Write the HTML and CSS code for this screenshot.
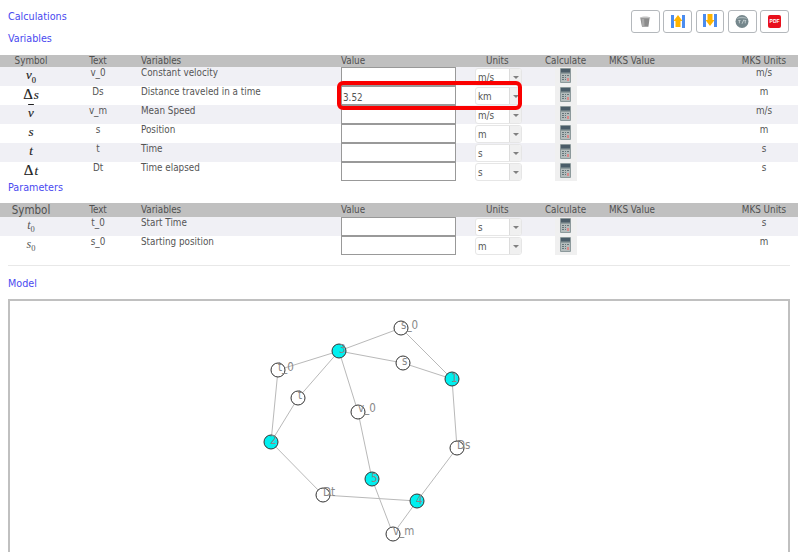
FILE: index.html
```html
<!DOCTYPE html>
<html lang="en">
<head>
<meta charset="utf-8">
<title>Calculations</title>
<link rel="stylesheet" href="styles.css">
</head>
<body>
<svg class="defs" width="0" height="0" aria-hidden="true">
  <symbol id="calc" viewBox="0 0 11 15">
    <rect width="11" height="15" rx="1" fill="#8d9a9c"/>
    <rect x="1" y="1" width="9" height="3.5" fill="#4a5c68"/>
    <rect x="1" y="6" width="9" height="8" fill="#b4bcbc"/>
    <path d="M2 7h2v1H2zM5 7h1v1H5zM7 7h2v1H7zM2 9h2v1H2zM5 9h1v1H5zM2 11h2v1H2zM5 11h1v1H5z" fill="#66757a"/>
    <rect x="7" y="10" width="2" height="3" fill="#d98a8a"/>
  </symbol>
</svg>

<header class="top">
  <div class="titles">
    <h1 class="link-title">Calculations</h1>
    <h2 class="link-title second">Variables</h2>
  </div>
  <div class="tools">
    <button class="tool" type="button" aria-label="Clear">
      <svg width="12" height="13" viewBox="0 0 14 14"><path d="M1.500 2.500 12.500 2 11 13H3.500z" fill="#8b8b8b"/><path d="M1 2.500C3 1 10 .6 13 2v1.200H1z" fill="#c2c2c2"/><path d="M3 4h3l.5 9H3.600z" fill="#a9a9a9"/></svg>
    </button>
    <button class="tool" type="button" aria-label="Load">
      <svg width="14" height="14" viewBox="0 0 14 14"><rect x="0" y="1" width="14" height="13" fill="#3f7fe8"/><rect x="2" y="1" width="10" height="13" fill="#fff"/><rect x="0" y="1" width="3" height="13" fill="#4a8cf0"/><rect x="11" y="1" width="3" height="13" fill="#4a8cf0"/><path d="M7 1 11.500 7H9.500v6h-5V7H2.500z" fill="#ffb400"/></svg>
    </button>
    <button class="tool" type="button" aria-label="Save">
      <svg width="14" height="14" viewBox="0 0 14 14"><rect x="0" y="0" width="14" height="13" fill="#3f7fe8"/><rect x="2" y="0" width="10" height="13" fill="#fff"/><rect x="0" y="0" width="3" height="13" fill="#4a8cf0"/><rect x="11" y="0" width="3" height="13" fill="#4a8cf0"/><path d="M4.500 0h5v6h2L7 12 2.500 6h2z" fill="#ffb400"/></svg>
    </button>
    <button class="tool" type="button" aria-label="Info">
      <svg width="14" height="13" viewBox="0 0 15 14"><circle cx="7.500" cy="7" r="7" fill="#75878c"/><path d="M1.500 4.500C4 1 11 1 13.500 4.500 11 3 4 3 1.500 4.500z" fill="#a9b6b9"/><path d="M3.500 6h2.500M4.700 6v3M7.500 9.500l2-4.500M10 6h2M11 6v3" stroke="#d7dfe0" stroke-width=".8" fill="none"/></svg>
    </button>
    <button class="tool" type="button" aria-label="PDF">
      <span class="pdf">PDF</span>
    </button>
  </div>
</header>

<section class="sheet">
  <div class="row head">
    <span class="c-sym">Symbol</span><span class="c-txt">Text</span><span class="c-var">Variables</span><span class="c-val">Value</span><span class="c-uni">Units</span><span class="c-calc">Calculate</span><span class="c-mks">MKS Value</span><span class="c-mu">MKS Units</span>
  </div>

  <div class="row odd">
    <span class="c-sym math"><i>v</i><sub>0</sub></span><span class="c-txt">v_0</span><span class="c-var">Constant velocity</span>
    <span class="c-val"><input class="num" type="text"></span>
    <span class="c-uni"><span class="pick"><span class="pick-v">m/s</span><span class="pick-a"></span></span></span>
    <span class="c-calc"><span class="calc"><svg width="11" height="15"><use href="#calc"/></svg></span></span>
    <span class="c-mks"></span><span class="c-mu">m/s</span>
  </div>
  <div class="row hl-row">
    <span class="c-sym math"><b>Δ</b><i>s</i></span><span class="c-txt">Ds</span><span class="c-var">Distance traveled in a time</span>
    <span class="c-val"><input class="num" type="text" value="3.52"></span>
    <span class="c-uni"><span class="pick"><span class="pick-v">km</span><span class="pick-a"></span></span></span>
    <span class="c-calc"><span class="calc"><svg width="11" height="15"><use href="#calc"/></svg></span></span>
    <span class="c-mks"></span><span class="c-mu">m</span>
    <span class="highlight"></span>
  </div>
  <div class="row odd">
    <span class="c-sym math"><i class="bar">v</i></span><span class="c-txt">v_m</span><span class="c-var">Mean Speed</span>
    <span class="c-val"><input class="num" type="text"></span>
    <span class="c-uni"><span class="pick"><span class="pick-v">m/s</span><span class="pick-a"></span></span></span>
    <span class="c-calc"><span class="calc"><svg width="11" height="15"><use href="#calc"/></svg></span></span>
    <span class="c-mks"></span><span class="c-mu">m/s</span>
  </div>
  <div class="row">
    <span class="c-sym math"><i>s</i></span><span class="c-txt">s</span><span class="c-var">Position</span>
    <span class="c-val"><input class="num" type="text"></span>
    <span class="c-uni"><span class="pick"><span class="pick-v">m</span><span class="pick-a"></span></span></span>
    <span class="c-calc"><span class="calc"><svg width="11" height="15"><use href="#calc"/></svg></span></span>
    <span class="c-mks"></span><span class="c-mu">m</span>
  </div>
  <div class="row odd">
    <span class="c-sym math"><i>t</i></span><span class="c-txt">t</span><span class="c-var">Time</span>
    <span class="c-val"><input class="num" type="text"></span>
    <span class="c-uni"><span class="pick"><span class="pick-v">s</span><span class="pick-a"></span></span></span>
    <span class="c-calc"><span class="calc"><svg width="11" height="15"><use href="#calc"/></svg></span></span>
    <span class="c-mks"></span><span class="c-mu">s</span>
  </div>
  <div class="row">
    <span class="c-sym math"><b>Δ</b><i>t</i></span><span class="c-txt">Dt</span><span class="c-var">Time elapsed</span>
    <span class="c-val"><input class="num" type="text"></span>
    <span class="c-uni"><span class="pick"><span class="pick-v">s</span><span class="pick-a"></span></span></span>
    <span class="c-calc"><span class="calc"><svg width="11" height="15"><use href="#calc"/></svg></span></span>
    <span class="c-mks"></span><span class="c-mu">s</span>
  </div>
</section>

<h2 class="link-title params">Parameters</h2>

<section class="sheet">
  <div class="row head head-2">
    <span class="c-sym sym-large">Symbol</span><span class="c-txt">Text</span><span class="c-var">Variables</span><span class="c-val">Value</span><span class="c-uni">Units</span><span class="c-calc">Calculate</span><span class="c-mks">MKS Value</span><span class="c-mu">MKS Units</span>
  </div>
  <div class="row odd">
    <span class="c-sym math small"><i>t</i><sub>0</sub></span><span class="c-txt">t_0</span><span class="c-var">Start Time</span>
    <span class="c-val"><input class="num" type="text"></span>
    <span class="c-uni"><span class="pick"><span class="pick-v">s</span><span class="pick-a"></span></span></span>
    <span class="c-calc"><span class="calc"><svg width="11" height="15"><use href="#calc"/></svg></span></span>
    <span class="c-mks"></span><span class="c-mu">s</span>
  </div>
  <div class="row">
    <span class="c-sym math small"><i>s</i><sub>0</sub></span><span class="c-txt">s_0</span><span class="c-var">Starting position</span>
    <span class="c-val"><input class="num" type="text"></span>
    <span class="c-uni"><span class="pick"><span class="pick-v">m</span><span class="pick-a"></span></span></span>
    <span class="c-calc"><span class="calc"><svg width="11" height="15"><use href="#calc"/></svg></span></span>
    <span class="c-mks"></span><span class="c-mu">m</span>
  </div>
</section>

<hr class="rule">
<h2 class="link-title model">Model</h2>

<div class="canvas">
  <svg class="graph" width="778" height="260" viewBox="10 301 778 260">
    <g class="edges">
      <line x1="401" y1="328" x2="339" y2="351"/><line x1="401" y1="328" x2="452" y2="379"/>
      <line x1="339" y1="351" x2="278" y2="370"/><line x1="339" y1="351" x2="403" y2="363"/>
      <line x1="403" y1="363" x2="452" y2="379"/><line x1="339" y1="351" x2="298" y2="398"/>
      <line x1="339" y1="351" x2="358" y2="412"/><line x1="278" y1="370" x2="271" y2="442"/>
      <line x1="298" y1="398" x2="271" y2="442"/><line x1="452" y1="379" x2="457" y2="448"/>
      <line x1="358" y1="412" x2="372" y2="479"/><line x1="271" y1="442" x2="323" y2="495"/>
      <line x1="323" y1="495" x2="417" y2="501"/><line x1="457" y1="448" x2="417" y2="501"/>
      <line x1="372" y1="479" x2="393" y2="534"/><line x1="417" y1="501" x2="393" y2="534"/>
    </g>
    <g class="nodes">
      <circle cx="401" cy="328" r="7"/><circle cx="403" cy="363" r="7"/><circle cx="278" cy="370" r="7"/>
      <circle cx="298" cy="398" r="7"/><circle cx="358" cy="412" r="7"/><circle cx="457" cy="448" r="7"/>
      <circle cx="323" cy="495" r="7"/><circle cx="393" cy="534" r="7"/>
      <circle class="on" cx="339" cy="351" r="7"/><circle class="on" cx="452" cy="379" r="7"/>
      <circle class="on" cx="271" cy="442" r="7"/><circle class="on" cx="372" cy="479" r="7"/>
      <circle class="on" cx="417" cy="501" r="7"/>
    </g>
    <g class="labels">
      <text x="401" y="329">s_0</text><text x="339" y="353">3</text><text x="402" y="365">s</text>
      <text x="451" y="382">1</text><text x="278" y="371">t_0</text><text x="298" y="399">t</text>
      <text x="358" y="412">v_0</text><text x="270" y="444">2</text><text x="457" y="449">Ds</text>
      <text x="371" y="482">5</text><text x="323" y="496">Dt</text><text x="416" y="504">4</text>
      <text x="393" y="535">v_m</text>
    </g>
  </svg>
</div>
</body>
</html>
```

FILE: styles.css
```css
* { box-sizing: border-box; }

html, body {
  margin: 0;
  height: 552px;
  overflow: hidden;
  background: #fff;
}

body {
  font-family: "DejaVu Sans Condensed", "DejaVu Sans", sans-serif;
  font-size: 9.800px;
  color: #555;
}

.defs { position: absolute; }

.top {
  display: flex;
  justify-content: space-between;
  height: 55px;
  padding: 10px 11px 0 8px;
}

.link-title {
  margin: 0;
  font-size: 10.700px;
  font-weight: normal;
  line-height: 13px;
  color: #4a4af0;
}

.second { margin-top: 9px; }

.tools {
  display: flex;
  gap: 3.500px;
  height: 22.500px;
}

.tool {
  display: flex;
  align-items: center;
  justify-content: center;
  width: 28.800px;
  height: 22.500px;
  padding: 0;
  background: #fff;
  border: 1.500px solid #b4b8bc;
  border-radius: 3px;
}

.pdf {
  display: block;
  width: 13px;
  height: 13px;
  border-radius: 2px;
  background: #e8101c;
  color: #fff;
  font-size: 5px;
  font-weight: bold;
  line-height: 13px;
  text-align: center;
}

.row {
  position: relative;
  display: grid;
  grid-template-columns: 62px 72px 207px 134px 58px 65px 132px 68px;
  height: 19px;
  line-height: 12px;
  width: 798px;
}

.hl-row { z-index: 2; }

.odd { background: #f0f0f5; }

.head {
  height: 12px;
  background: #c0c0c0;
  color: #505050;
  line-height: 12px;
}

.head-2 {
  height: 14px;
  line-height: 14px;
}

.sym-large { font-size: 11.500px; }

.c-sym, .c-txt, .c-calc, .c-mu { text-align: center; }
.c-var { padding-left: 7px; }
.c-mks { padding-left: 11px; }
.head .c-uni { padding-left: 11px; }

.math {
  font-family: "Liberation Serif", serif;
  font-size: 13px;
  line-height: 16px;
  color: #222;
}

.math b { font-size: 15px; font-weight: normal; font-style: normal; margin-right: 1px; -webkit-text-stroke: .2px #222; }
.math i { -webkit-text-stroke: .15px #222; }
.math sub { font-size: 8.500px; line-height: 0; -webkit-text-stroke: .15px #222; }
.small { color: #555; font-size: 12px; }
.small i { -webkit-text-stroke: 0; color: #555; }
.small sub { -webkit-text-stroke: 0; }

.bar { text-decoration: overline; text-decoration-thickness: 1px; }

.num {
  display: block;
  width: 115px;
  height: 19px;
  padding: 3px 1px 0;
  margin: 0;
  font: 9.800px "DejaVu Sans Condensed", "DejaVu Sans", sans-serif;
  color: #555;
  background: #fff;
  border: 1px solid #999;
  border-radius: 0;
  outline: 0;
}

.pick {
  display: flex;
  width: 47px;
  height: 18px;
  margin-top: 1px;
  background: #fff;
  border: 1px solid #e6e6e6;
  border-radius: 3px;
  overflow: hidden;
}

.pick-v {
  flex: 1;
  padding: 3px 0 0 2px;
  line-height: 12px;
}

.pick-a {
  position: relative;
  width: 12px;
  background: #f0f0f0;
  border-left: 1px solid #dcdcdc;
}

.pick-a::after {
  content: "";
  position: absolute;
  top: 7px;
  left: 3px;
  border: 3px solid transparent;
  border-top: 3px solid #808080;
  border-bottom: 0;
}

.calc {
  display: flex;
  justify-content: center;
  width: 22px;
  height: 19px;
  padding-top: 1px;
  margin: 0 auto;
  background: #f0f0f0;
}

.highlight {
  position: absolute;
  left: 337px;
  top: -5px;
  width: 185px;
  height: 29px;
  border: 4.500px solid #fa0000;
  border-radius: 6px;
}

.params {
  height: 22px;
  padding: 0 0 0 8px;
  line-height: 13px;
}

.rule {
  height: 1px;
  margin: 10px 10px 0 8px;
  background: #e8e8e8;
  border: 0;
}

.model {
  margin-top: 11px;
  margin-left: 8px;
}

.canvas {
  width: 782px;
  height: 260px;
  margin: 9px 0 0 8px;
  border: 2px solid #c0c0c0;
  overflow: hidden;
}

.graph { display: block; }

.edges line { stroke: #b9b9b9; stroke-width: 1; }
.nodes circle { fill: #fff; stroke: #333; stroke-width: 1; }
.nodes .on { fill: #00f0f0; }
.labels text {
  font: 11.500px "DejaVu Sans Condensed", "DejaVu Sans", sans-serif;
  fill: #888;
}
```
